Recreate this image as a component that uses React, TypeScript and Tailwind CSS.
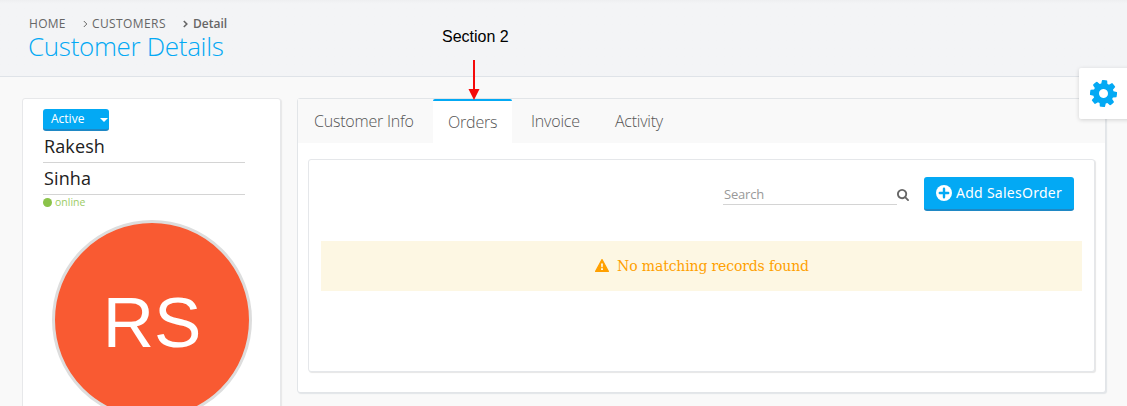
import React from "react";

const tabs = ["Customer Info", "Orders", "Invoice", "Activity"];
const tabWidths = ["w-[135px]", "w-[79px]", "w-[87px]", "w-[79px]"];
const tabStyles = [
  "pl-[16px] leading-[44px] tracking-[-0.22px]",
  "rounded-t-[2px] border-t-2 border-[#03a9f4] bg-white pl-[15px] leading-[42px] tracking-[-0.2px]",
  "pl-[19px] leading-[44px] tracking-[-0.2px]",
  "pl-[16px] leading-[44px] tracking-[-0.25px]",
];

function Cog() {
  return (
    <svg viewBox="0 0 1536 1536" className="size-[27px] rotate-[5deg] fill-[#03a9f4]">
      <path transform="translate(0 -128)" d="M1024 896q0-106-75-181t-181-75-181 75-75 181 75 181 181 75 181-75 75-181zm512-109v222q0 12-8 23t-20 13l-185 28q-19 54-39 91 35 50 107 138 10 12 10 25t-9 23q-27 37-99 108t-94 71q-12 0-26-9l-138-108q-44 23-91 38-16 136-29 186-7 28-36 28h-222q-14 0-24.5-8.5t-11.5-21.5l-28-184q-49-16-90-37l-141 107q-10 9-25 9-14 0-25-11-126-114-165-168-7-10-7-23 0-12 8-23 15-21 51-66.5t54-70.5q-27-50-41-99l-183-27q-13-2-21-12.5t-8-23.5v-222q0-12 8-23t19-13l186-28q14-46 39-92-40-57-107-138-10-12-10-24 0-10 9-23 26-36 98.5-107.5t94.5-71.5q13 0 26 10l138 107q44-23 91-38 16-136 29-186 7-28 36-28h222q14 0 24.5 8.5t11.5 21.5l28 184q49 16 90 37l142-107q9-9 24-9 13 0 25 10 129 119 165 170 7 8 7 22 0 12-8 23-15 21-51 66.5t-54 70.5q26 50 41 98l183 28q13 2 21 12.5t8 23.5z" />
    </svg>
  );
}

function SearchIcon() {
  return (
    <svg viewBox="0 0 1664 1664" className="mt-[12px] mr-px size-3 shrink-0 fill-[#666]">
      <path transform="translate(0 -128)" d="M1152 832q0-185-131.5-316.5t-316.5-131.5-316.5 131.5-131.5 316.5 131.5 316.5 316.5 131.5 316.5-131.5 131.5-316.5zm512 832q0 52-38 90t-90 38q-54 0-90-38l-343-342q-179 124-399 124-143 0-273.5-55.5t-225-150-150-225-55.5-273.5 55.5-273.5 150-225 225-150 273.5-55.5 273.5 55.5 225 150 150 225 55.5 273.5q0 220-124 399l343 343q37 37 37 90z" />
    </svg>
  );
}

function PlusCircle() {
  return (
    <svg viewBox="0 0 16 16" className="mr-[4px] size-4 shrink-0">
      <circle cx="8" cy="8" r="8" fill="white" />
      <path d="M8 3.8V12.2M3.8 8H12.2" fill="none" stroke="#03a9f4" strokeWidth="2.4" strokeLinecap="round" />
    </svg>
  );
}

function Chevron({ bold = false }: { bold?: boolean }) {
  return (
    <svg viewBox="0 0 5 8" className="mt-[1px] h-2 w-[5px] fill-none stroke-current">
      <path d="M.8 1 3.8 4 .8 7" strokeWidth={bold ? 1.6 : 1} />
    </svg>
  );
}

export default function App() {
  return (
    <div className="relative h-[406px] w-[1127px] overflow-hidden bg-[#f9f9f9] font-['Open_Sans',sans-serif]">
      <header className="h-[77px] border-b border-[#dfe3e8] bg-[#f3f4f6] bg-linear-to-b from-[#eeeff1] via-[#f3f4f6] via-5% to-[#f3f4f6] pt-[15px] pl-[29px]">
        <nav className="flex h-[17px] items-center text-[12px] leading-[17px] text-[#666]">
          <span className="w-[54px] tracking-[0.3px]">HOME</span>
          <Chevron />
          <span className="ml-[4px] w-[91px] tracking-[0.4px]">CUSTOMERS</span>
          <Chevron bold />
          <span className="ml-[5px] font-semibold">Detail</span>
        </nav>
        <h1 className="-ml-px text-[26px] leading-[28px] font-light tracking-[-0.32px] text-[#03a9f4]">Customer Details</h1>
      </header>

      <main className="flex items-start pt-[21px] pl-[22px]">
        <aside className="h-[400px] w-[259px] shrink-0 rounded-[3px] border border-[#e7e8ea] bg-white pt-[10px] pl-[20px] shadow-[1px_1px_1px_#e7e7e7]">
          <button className="flex h-[22px] w-[66px] items-center justify-between rounded-[3px] border-b-2 border-[#1f88c5] bg-[#03a9f4] pr-[1px] pl-2 text-[12px] leading-5 text-white">
            Active
            <svg viewBox="0 0 8 4" className="mt-[2px] h-1 w-2 fill-white"><path d="M0 0H8L4 4Z" /></svg>
          </button>
          <div className="h-[32px] w-[202px] border-b border-[#d4d4d4] pl-px text-[18px] leading-[31px] tracking-[0.12px] text-[#212121]">Rakesh</div>
          <div className="h-[32px] w-[202px] border-b border-[#d4d4d4] pl-px text-[18px] leading-[31px] tracking-[0.12px] text-[#212121]">Sinha</div>
          <div className="flex h-[15px] items-center gap-[3px] text-[10.5px] text-[#9ccc65]">
            <span className="size-[9px] rounded-full bg-[#8bc34a]" />
            online
          </div>
          <div className="mt-[10px] ml-[9px] flex size-[200px] items-center justify-center rounded-full border-[3px] border-[#ddd] bg-[#f95a32] pt-[5px] font-['Liberation_Sans',sans-serif] text-[71px] leading-none text-white">RS</div>
        </aside>

        <section className="ml-[16px] h-[295px] w-[809px] shrink-0 rounded-[3px] border border-[#e2e5e8] bg-white shadow-[1px_1px_1px_#e2e5e8]">
          <div className="flex h-[44px] bg-[#f9f9f9] text-[16px] font-light text-[#555]">
            {tabs.map((tab, i) => (
              <div key={tab} className={`${tabWidths[i]} ${tabStyles[i]} whitespace-nowrap`}>
                {tab}
              </div>
            ))}
          </div>
          <div className="mt-[16px] ml-[10px] h-[213px] w-[787px] rounded-[3px] border border-[#e5e7ea] bg-white pr-[12px] pl-[12px] shadow-[1px_1px_1px_#e6e6e6]">
            <div className="flex h-[81px] items-start justify-end pt-[17px] pr-[8px]">
              <div className="h-[28px] w-[174px] border-b border-[#d4d4d4] pl-px text-[13px] leading-[34px] tracking-[-0.2px] text-[#999]">Search</div>
              <SearchIcon />
              <button className="ml-[14px] flex h-[34px] w-[150px] items-center rounded-[3px] border-b-2 border-[#1f88c5] bg-[#03a9f4] pl-[12px] font-['Noto_Sans',sans-serif] text-[14px] text-white">
                <PlusCircle />
                <span className="-mt-[2px] tracking-[0.27px] whitespace-nowrap">Add SalesOrder</span>
              </button>
            </div>
            <div className="flex h-[50px] items-center justify-center bg-[#fdf7e3] pl-px font-['DejaVu_Serif',serif] text-[14px] tracking-[-0.14px] text-[#ffa000]">
              <svg viewBox="0 0 14 13" className="-mt-px mr-[8px] h-[13px] w-[14px]">
                <path d="M7 .6 13.4 12.4H.6Z" fill="currentColor" stroke="currentColor" strokeWidth="1.2" strokeLinejoin="round" />
                <path d="M6 4.5H8L7.7 8.2H6.3ZM6 9.3H8V11H6Z" fill="#fdf7e3" />
              </svg>
              No matching records found
            </div>
          </div>
        </section>
      </main>

      <div className="absolute top-[28px] left-[442px] font-['Liberation_Sans',sans-serif] text-[16px] leading-[18px] text-black">Section 2</div>
      <svg viewBox="0 0 12 40" className="absolute top-[60px] left-[468px] h-10 w-3 fill-[#f50a0a]">
        <path d="M5 0H7V29H11.5L6 40 .5 29H5Z" />
      </svg>
      <div className="absolute top-[68px] left-[1079px] flex h-[51px] w-[60px] items-center rounded-[2px] bg-white pb-px pl-[11px] shadow-[0_1px_4px_rgba(0,0,0,0.16)]">
        <Cog />
      </div>
    </div>
  );
}
